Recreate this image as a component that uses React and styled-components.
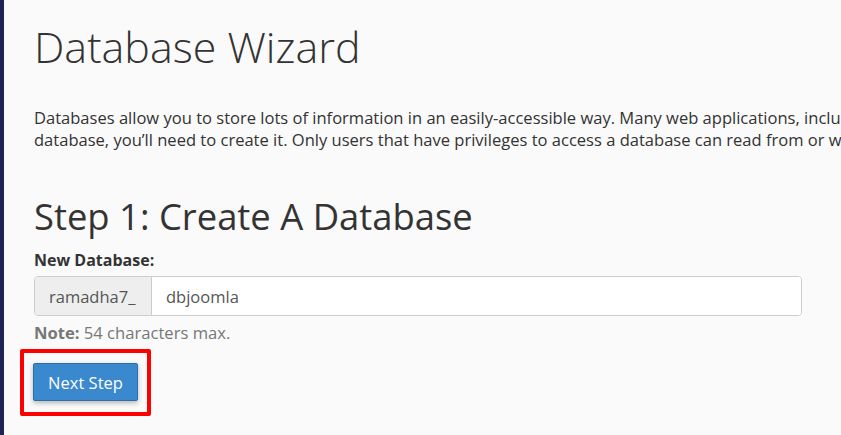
import React from 'react';
import styled, { createGlobalStyle } from 'styled-components';

const GlobalStyle = createGlobalStyle`
    html, body {
        margin: 0;
        padding: 0;
        background: #fafafa;
        overflow: hidden;
    }
    body {
        font-family: "Open Sans", "Liberation Sans", sans-serif;
        color: #333;
    }
`

const Page = styled.div`
    display: flex;
    min-height: 435px;
    width: 841px;
`
const SideStripe = styled.div`
    width: 4px;
    flex-shrink: 0;
    background: #1c2454;
`
const Main = styled.main`
    flex: 1;
    min-width: 0;
    padding: 19px 0 0 30px;
    overflow: hidden;
`
const Title = styled.h1`
    margin: 0;
    font-size: 43px;
    font-weight: 300;
    line-height: 56px;
    color: #333;
`
const Intro = styled.p`
    margin: 32px 0 0;
    font-size: 16.55px;
    line-height: 22px;
    white-space: nowrap;
    color: #333;
`
const StepTitle = styled.h2`
    margin: 43px 0 0;
    font-size: 36.4px;
    font-weight: 400;
    line-height: 44px;
    color: #333;
`
const Label = styled.label`
    display: block;
    margin-top: 12px;
    font-size: 16px;
    font-weight: 700;
    line-height: 20px;
    color: #333;
`
const InputGroup = styled.div`
    display: flex;
    width: 768px;
    height: 40px;
    margin-top: 6px;
    border: 1px solid #ccc;
    border-radius: 4px;
    box-sizing: border-box;
    overflow: hidden;
    background: #fff;
`
const Addon = styled.span`
    display: flex;
    align-items: center;
    width: 117px;
    box-sizing: border-box;
    padding-left: 14px;
    background: #eee;
    border-right: 1px solid #ccc;
    font-size: 16.5px;
    color: #555;
`
const TextInput = styled.input`
    flex: 1;
    border: none;
    outline: none;
    padding: 0 14px;
    font-family: inherit;
    font-size: 16.5px;
    color: #555;
    background: #fff;
`
const Note = styled.p`
    margin: 7px 0 0;
    font-size: 16.6px;
    line-height: 20px;
    color: #777;

    strong {
        font-weight: 700;
    }
`
const Highlight = styled.div`
    display: inline-block;
    margin: 6px 0 0 -14px;
    padding: 10px 9px 11px;
    border: 4px solid #ff0000;
    border-radius: 2px;
`
const Button = styled.button`
    display: block;
    width: 105px;
    height: 38px;
    padding: 0;
    border: 1px solid #2e6fa8;
    border-radius: 2px;
    background: #3a88cd;
    color: #fff;
    font-family: inherit;
    font-size: 16.5px;
    box-shadow: 0 2px 5px rgba(0, 0, 0, 0.28);
    cursor: pointer;
`

const App = () => {
    return (
        <Page>
            <GlobalStyle />
            <SideStripe />
            <Main>
                <Title>Database Wizard</Title>
                <Intro>
                    Databases allow you to store lots of information in an easily-accessible way. Many web applications, including bulletin boards, Content Management Systems, and online retail shops, require database access. To use a
                    <br />
                    database, you’ll need to create it. Only users that have privileges to access a database can read from or write to that database.
                </Intro>
                <StepTitle>Step 1: Create A Database</StepTitle>
                <Label htmlFor="newdb">New Database:</Label>
                <InputGroup>
                    <Addon>ramadha7_</Addon>
                    <TextInput id="newdb" defaultValue="dbjoomla" />
                </InputGroup>
                <Note><strong>Note:</strong> 54 characters max.</Note>
                <Highlight>
                    <Button>Next Step</Button>
                </Highlight>
            </Main>
        </Page>
    )
}

export default App;
